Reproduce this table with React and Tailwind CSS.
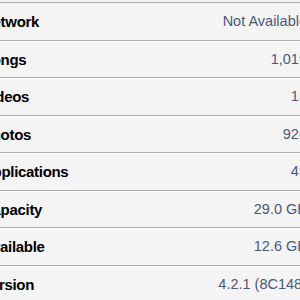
import React from 'react';

const rows = [
    { label: 'Network', value: 'Not Available' },
    { label: 'Songs', value: '1,019' },
    { label: 'Videos', value: '13' },
    { label: 'Photos', value: '926' },
    { label: 'Applications', value: '49' },
    { label: 'Capacity', value: '29.0 GB' },
    { label: 'Available', value: '12.6 GB' },
    { label: 'Version', value: '4.2.1 (8C148)' },
];

const App = () => {
    return (
        <div
            className="w-[300px] h-[300px] overflow-hidden bg-[#f4f4f4]"
            style={{ fontFamily: '"Liberation Sans", Arial, sans-serif' }}
        >
            {/* grouped table, wider than the view so both edges run off */}
            <div className="w-[345px] -ml-[28px] mt-[2px] border-t border-[#b0b0b0]">
                {rows.map((row) => (
                    <div
                        key={row.label}
                        className="flex items-center justify-between h-[37.5px] pt-[2px] px-[10px] border-b border-[#a9a9a9] shadow-[0_1px_0_#ffffff]"
                    >
                        <span className="text-[15px] font-bold text-black tracking-[-0.3px]">{row.label}</span>
                        <span className="text-[14.5px] text-[#4a5878]">{row.value}</span>
                    </div>
                ))}
            </div>
        </div>
    );
};

export default App;
